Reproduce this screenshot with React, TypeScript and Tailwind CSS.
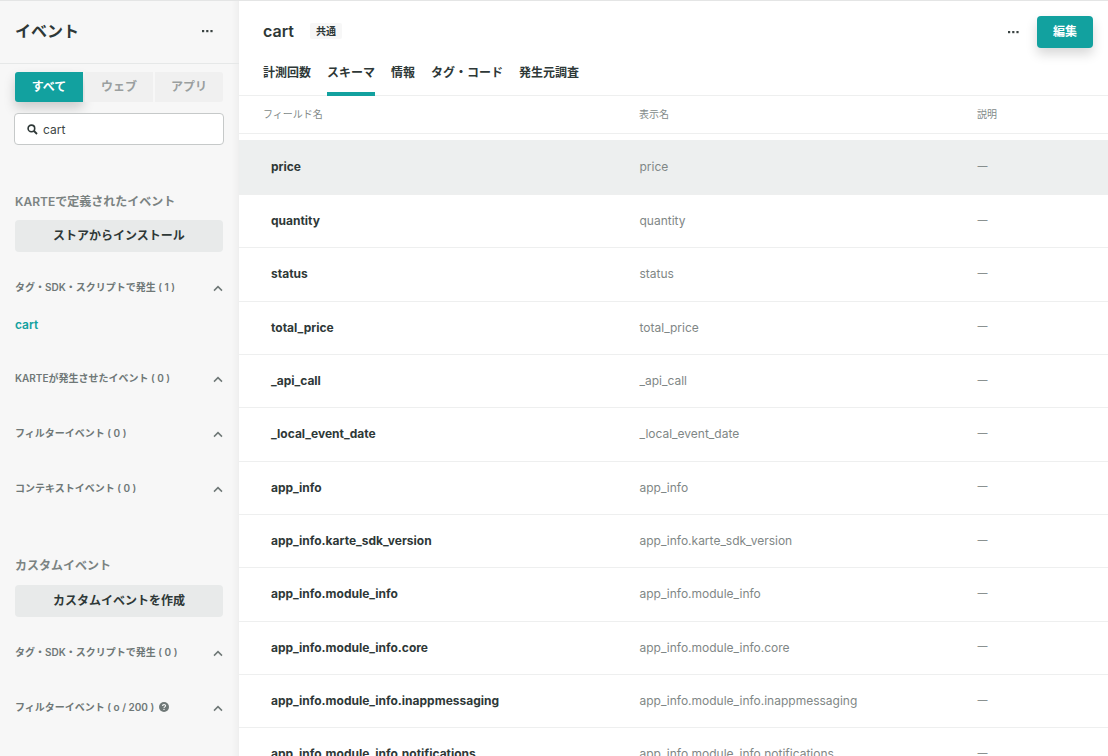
import React from "react";

const font = "font-['Inter','Noto_Sans_CJK_JP',sans-serif]";

function Dots({ className = "" }: { className?: string }) {
  return (
    <svg width="11" height="3" viewBox="0 0 11 3" className={className}>
      <rect x="0" y="0" width="2.2" height="2.2" fill="#3a4342" />
      <rect x="4.2" y="0" width="2.2" height="2.2" fill="#3a4342" />
      <rect x="8.4" y="0" width="2.2" height="2.2" fill="#3a4342" />
    </svg>
  );
}

function Chevron() {
  return (
    <svg width="10" height="7" viewBox="0 0 10 7" fill="none" className="translate-y-[1px]">
      <path d="M1 5.6 L5 1.6 L9 5.6" stroke="#6f7877" strokeWidth="1.5" />
    </svg>
  );
}

function Section({ label, h, children }: { label: React.ReactNode; h: string; children?: React.ReactNode }) {
  return (
    <div className={h}>
      <div className="flex h-[16px] items-center justify-between pl-[15px] pr-[16px]">
        <span className="text-[10px] font-semibold text-[#6f7877] flex items-center">{label}</span>
        <Chevron />
      </div>
      {children}
    </div>
  );
}

const rows = [
  "price",
  "quantity",
  "status",
  "total_price",
  "_api_call",
  "_local_event_date",
  "app_info",
  "app_info.karte_sdk_version",
  "app_info.module_info",
  "app_info.module_info.core",
  "app_info.module_info.inappmessaging",
  "app_info.module_info.notifications",
];

function Sidebar() {
  return (
    <aside className="relative z-10 flex w-[239px] shrink-0 flex-col bg-[#f7f7f7] shadow-[inset_-10px_0_10px_-10px_rgba(0,0,0,0.07)]">
      <div className="flex h-[63px] items-center justify-between border-b border-[#e6e8e8] pb-[2px] pl-[15px] pr-[26px]">
        <h1 className="text-[16px] font-bold text-[#2e3837]">イベント</h1>
        <Dots />
      </div>
      <div className="mt-[8px] flex gap-[2px] pl-[15px] pr-[16px]">
        <div className="flex h-[30px] w-[68px] items-center justify-center rounded-l-[3px] bg-[#12a19f] text-[12px] font-semibold text-white shadow-[0_6px_12px_rgba(0,0,0,0.18)]">すべて</div>
        <div className="flex h-[30px] w-[68px] items-center justify-center bg-[#f0f0f0] text-[12px] font-semibold text-[#9a9f9f]">ウェブ</div>
        <div className="flex h-[30px] w-[68px] items-center justify-center rounded-r-[3px] bg-[#f0f0f0] text-[12px] font-semibold text-[#9a9f9f]">アプリ</div>
      </div>
      <div className="mx-[14px] mt-[11px] flex h-[32px] w-[210px] items-center rounded-[4px] border border-[#c6c9c9] bg-white pl-[12px]">
        <svg width="11" height="11" viewBox="0 0 11 11" fill="none">
          <circle cx="4.4" cy="4.4" r="3.3" stroke="#2e3837" strokeWidth="1.6" />
          <path d="M7 7 L10 10" stroke="#2e3837" strokeWidth="1.8" />
        </svg>
        <span className="ml-[5px] translate-y-[0.5px] text-[12px] text-[#3d4645]">cart</span>
      </div>
      <h2 className="mt-[49px] pl-[15px] text-[12px] font-semibold leading-[16px] text-[#7b8382]">KARTEで定義されたイベント</h2>
      <button className="mx-[15px] mt-[10px] flex h-[32px] w-[208px] items-center justify-center rounded-[4px] bg-[#e8eaea] text-[12px] font-semibold text-[#2e3837]">ストアからインストール</button>
      <div className="mt-[27px]">
        <Section label="タグ・SDK・スクリプトで発生 ( 1 )" h="h-[91px]">
          <div className="mt-[22px] pl-[15px] text-[12px] font-semibold leading-[16px] text-[#12a19f]">cart</div>
        </Section>
        <Section label="KARTEが発生させたイベント ( 0 )" h="h-[55px]" />
        <Section label="フィルターイベント ( 0 )" h="h-[55px]" />
        <Section label="コンテキストイベント ( 0 )" h="h-[78px]" />
      </div>
      <h2 className="pl-[15px] text-[12px] font-semibold leading-[16px] text-[#7b8382]">カスタムイベント</h2>
      <button className="mx-[15px] mt-[11px] flex h-[32px] w-[208px] items-center justify-center rounded-[4px] bg-[#e8eaea] text-[12px] font-semibold text-[#2e3837]">カスタムイベントを作成</button>
      <div className="mt-[27px]">
        <Section label="タグ・SDK・スクリプトで発生 ( 0 )" h="h-[55px]" />
        <Section
          label={
            <>
              フィルターイベント ( o / 200 )
              <svg width="10" height="10" viewBox="0 0 10 10" className="ml-[5px]">
                <circle cx="5" cy="5" r="5" fill="#6f7877" />
                <path d="M3.5 3.9 C3.5 2.2 6.6 2.2 6.6 3.8 C6.6 4.9 5 4.8 5 6" stroke="#f7f7f7" strokeWidth="1.1" fill="none" />
                <rect x="4.4" y="6.8" width="1.2" height="1.2" fill="#f7f7f7" />
              </svg>
            </>
          }
          h="h-[55px]"
        />
      </div>
    </aside>
  );
}

function Tab({ label, active }: { label: string; active?: boolean }) {
  return (
    <div className="relative flex h-[47px] items-start pt-[17px] text-[12px] font-semibold leading-[16px] text-[#2e3837]">
      {label}
      {active && <div className="absolute bottom-[-1px] left-0 right-0 h-[4px] bg-[#12a19f]" />}
    </div>
  );
}

function Main() {
  return (
    <main className="min-w-0 flex-1 bg-white">
      <div className="flex h-[47px] items-start justify-between pl-[24px] pr-[15px] pt-[15px]">
        <div className="flex h-[32px] items-center pb-[2px]">
          <span className="text-[16px] font-semibold text-[#2e3837]">cart</span>
          <span className="ml-[16px] flex h-[16px] w-[32px] items-center justify-center rounded-[2px] bg-[#f7f7f7] text-[10px] font-semibold text-[#2e3837]">共通</span>
        </div>
        <div className="flex items-center">
          <Dots className="mr-[18px]" />
          <button className="flex h-[32px] w-[56px] items-center justify-center rounded-[4px] bg-[#12a19f] text-[12px] font-semibold text-white shadow-[0_6px_12px_rgba(0,0,0,0.16)]">編集</button>
        </div>
      </div>
      <div className="flex h-[48px] gap-[16px] border-b border-[#eeefef] pl-[24px]">
        <Tab label="計測回数" />
        <Tab label="スキーマ" active />
        <Tab label="情報" />
        <Tab label="タグ・コード" />
        <Tab label="発生元調査" />
      </div>
      <div className="grid h-[38px] grid-cols-[376px_338px_1fr] items-center border-b border-[#eeefef] pl-[24px] text-[10px] text-[#828a89]">
        <span>フィールド名</span>
        <span>表示名</span>
        <span>説明</span>
      </div>
      <div className="mt-[6px]">
        {rows.map((r, i) => (
          <div
            key={r}
            className={`grid grid-cols-[368.5px_338px_1fr] items-center border-b border-[#eeefef] pl-[32px] text-[12px] ${i === 0 ? "h-[55px] bg-[#edefef]" : "h-[53.33px]"}`}
          >
            <span className="font-bold text-[#2e3837]">{r}</span>
            <span className="text-[#7f8786]">{r}</span>
            <span className="-translate-y-[1px] text-[10px] text-[#6f7877]">—</span>
          </div>
        ))}
      </div>
    </main>
  );
}

export default function App() {
  return (
    <div className={`${font} flex h-[756px] w-[1108px] overflow-hidden border-t border-[#e4e5e5]`}>
      <Sidebar />
      <Main />
    </div>
  );
}
